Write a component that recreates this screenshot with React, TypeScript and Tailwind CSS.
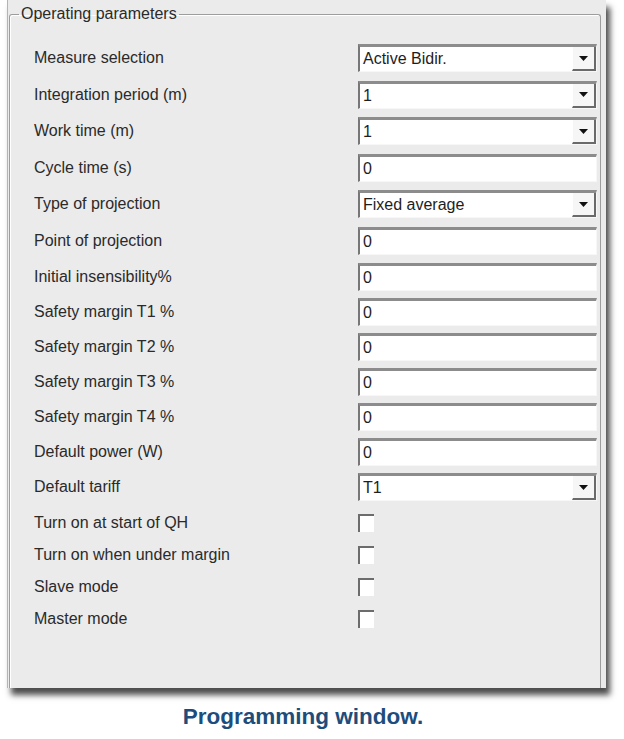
import React from 'react';

// Rows of the "Operating parameters" group
type Row = {
  label: string;
  kind: 'select' | 'text' | 'check';
  value?: string;
  gap: string; // space above the row
};

const rows: Row[] = [
  { label: 'Measure selection', kind: 'select', value: 'Active Bidir.', gap: 'mt-[21px]' },
  { label: 'Integration period (m)', kind: 'select', value: '1', gap: 'mt-[8.5px]' },
  { label: 'Work time (m)', kind: 'select', value: '1', gap: 'mt-[8.5px]' },
  { label: 'Cycle time (s)', kind: 'text', value: '0', gap: 'mt-[8.5px]' },
  { label: 'Type of projection', kind: 'select', value: 'Fixed average', gap: 'mt-[8.5px]' },
  { label: 'Point of projection', kind: 'text', value: '0', gap: 'mt-[8.5px]' },
  { label: 'Initial insensibility%', kind: 'text', value: '0', gap: 'mt-[8.5px]' },
  { label: 'Safety margin T1 %', kind: 'text', value: '0', gap: 'mt-[7px]' },
  { label: 'Safety margin T2 %', kind: 'text', value: '0', gap: 'mt-[7px]' },
  { label: 'Safety margin T3 %', kind: 'text', value: '0', gap: 'mt-[7px]' },
  { label: 'Safety margin T4 %', kind: 'text', value: '0', gap: 'mt-[7px]' },
  { label: 'Default power (W)', kind: 'text', value: '0', gap: 'mt-[7px]' },
  { label: 'Default tariff', kind: 'select', value: 'T1', gap: 'mt-[7px]' },
  { label: 'Turn on at start of QH', kind: 'check', gap: 'mt-[8px]' },
  { label: 'Turn on when under margin', kind: 'check', gap: 'mt-[4px]' },
  { label: 'Slave mode', kind: 'check', gap: 'mt-[4px]' },
  { label: 'Master mode', kind: 'check', gap: 'mt-[4px]' },
];

const Field: React.FC<{ row: Row }> = ({ row }) => {
  if (row.kind === 'check') {
    return (
      <div className="w-[16px] h-[18px] bg-white border-t-2 border-l-2 border-[#6c6c6c]" />
    );
  }
  return (
    <div className="w-[239px] h-[28px] flex bg-white border-t-[3px] border-t-[#8c8c8c] border-l-2 border-l-[#777] border-b border-b-[#f7f7f7] border-r border-r-[#f7f7f7]">
      <span className="flex-1 pl-[3px] leading-[24px] text-[16px] text-[#1e1e1e]">{row.value}</span>
      {row.kind === 'select' && (
        <div className="w-[24px] h-full flex items-center justify-center bg-[#f6f6f6] border-b-2 border-r-2 border-[#6a6a6a] border-l border-l-white">
          <svg width="9" height="5" viewBox="0 0 9 5">
            <path d="M0 0H9L4.5 5Z" fill="#111" />
          </svg>
        </div>
      )}
    </div>
  );
};

const App: React.FC = () => {
  return (
    <div className="w-[624px] h-[739px] bg-white overflow-hidden" style={{ fontFamily: '"Liberation Sans", Arial, sans-serif' }}>
      {/* Dialog window */}
      <div className="ml-[7px] w-[599px] h-[688px] flex flex-col bg-[#ebebeb] border-l border-l-[#b4b4b4] shadow-[4px_7px_6px_rgba(0,0,0,0.7)]">
        <fieldset className="mt-[5px] ml-[1px] mr-[5px] flex-1 border border-b-0 border-[#9d9d9d] rounded-t-[3px] shadow-[inset_1px_1px_0_#ffffff]">
          <legend className="ml-[9px] px-[2px] text-[16px] leading-[18px] text-[#2a2a2a]">Operating parameters</legend>
          <div className="pl-[24px] pr-[3px]">
            {rows.map((row) => (
              <div key={row.label} className={`${row.gap} flex items-center h-[28px]`}>
                <span className="w-[324px] text-[16px] text-[#2a2a2a] whitespace-nowrap">{row.label}</span>
                <Field row={row} />
              </div>
            ))}
          </div>
        </fieldset>
      </div>

      {/* Caption */}
      <p className="mt-[16px] w-[606px] text-center text-[22.5px] leading-[26px] font-bold text-[#1c4d7c]">
        Programming window.
      </p>
    </div>
  );
};

export default App;
